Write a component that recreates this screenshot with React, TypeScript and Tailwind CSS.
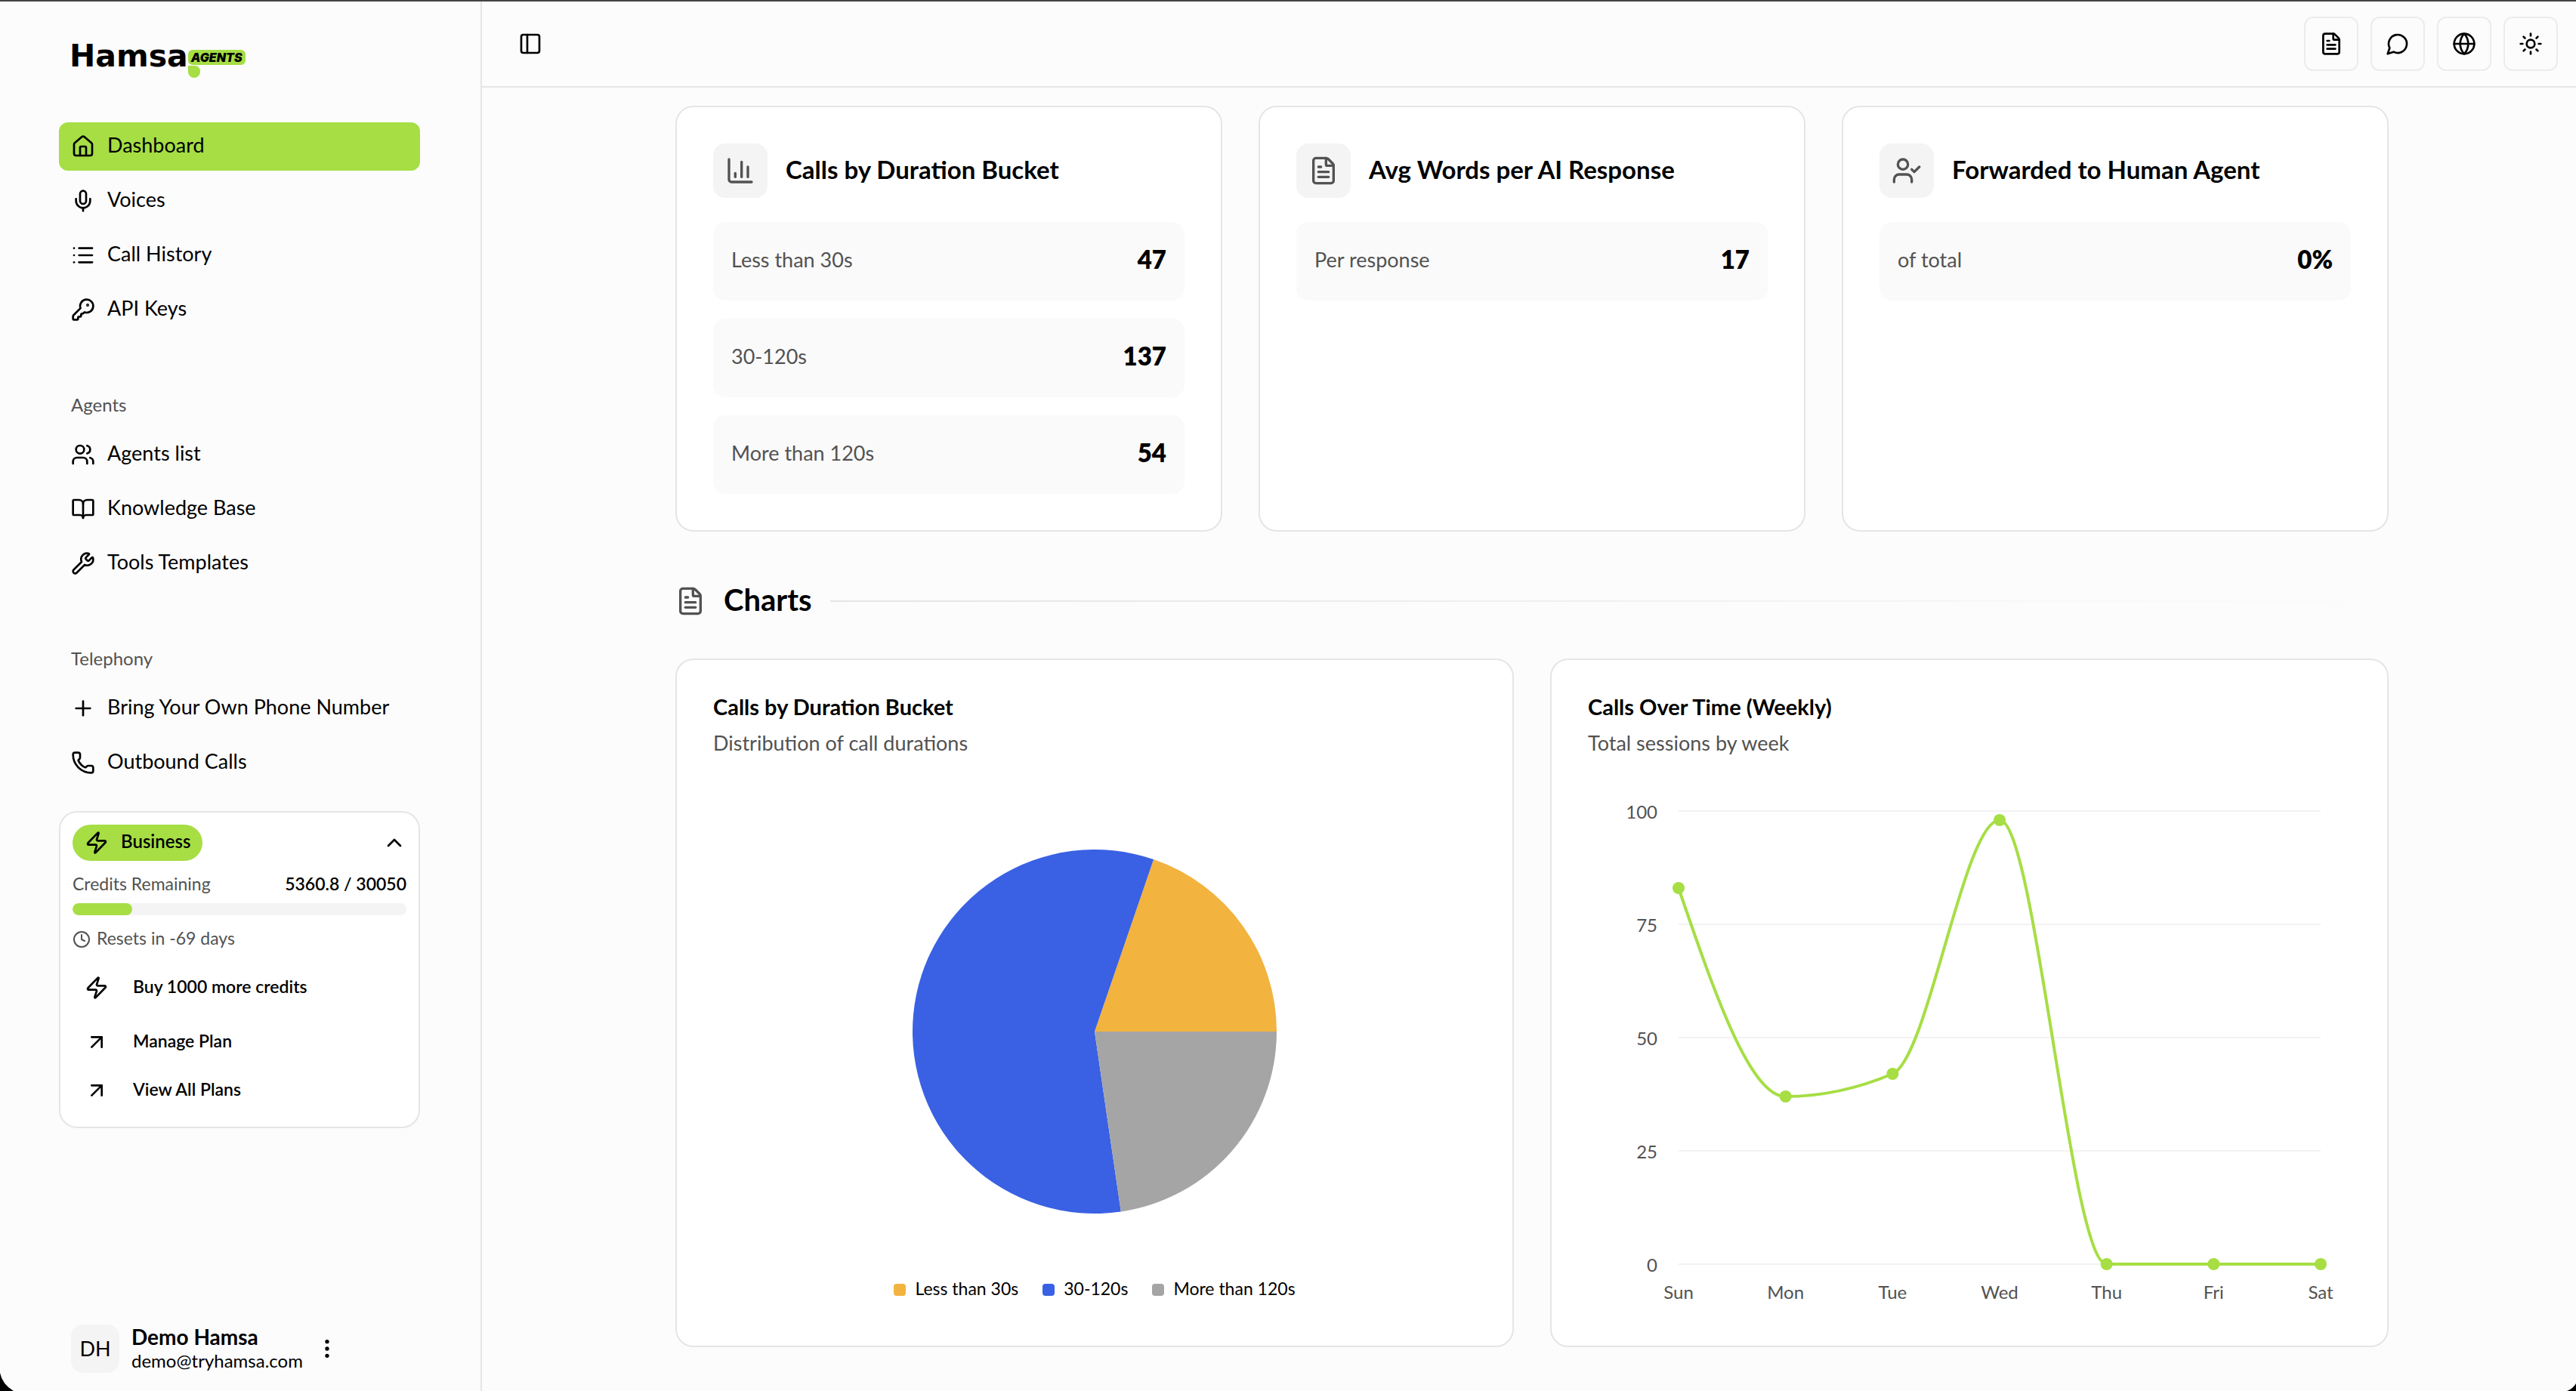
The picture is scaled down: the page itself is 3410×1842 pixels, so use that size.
import type { ReactNode } from 'react';
import {
  ArrowUpRight,
  BookOpen,
  ChevronUp,
  Clock,
  EllipsisVertical,
  FileText,
  Globe,
  House,
  List,
  Mic,
  PanelLeft,
  Phone,
  Plus,
  Sun,
  Users,
  Wrench,
  Zap,
} from 'lucide-react';

const buckets = [
  { label: 'Less than 30s', value: 47, fill: '#f2b33f', swatch: 'bg-[#f2b33f]' },
  { label: '30-120s', value: 137, fill: '#3a61e3', swatch: 'bg-[#3a61e3]' },
  { label: 'More than 120s', value: 54, fill: '#a5a5a5', swatch: 'bg-[#a5a5a5]' },
];

const weekly = [
  { day: 'Sun', calls: 83 },
  { day: 'Mon', calls: 37 },
  { day: 'Tue', calls: 42 },
  { day: 'Wed', calls: 98 },
  { day: 'Thu', calls: 0 },
  { day: 'Fri', calls: 0 },
  { day: 'Sat', calls: 0 },
];

function Icon({ children, className = 'size-8' }: { children: ReactNode; className?: string }) {
  return (
    <svg
      viewBox="0 0 24 24"
      fill="none"
      stroke="currentColor"
      strokeWidth="2"
      strokeLinecap="round"
      strokeLinejoin="round"
      className={className}
    >
      {children}
    </svg>
  );
}

function Logo() {
  return (
    <a href="#" className="flex items-start pl-3.5 text-black">
      <span className="font-['DejaVu_Sans'] text-[41px] leading-10 font-bold">Hamsa</span>
      <span className="relative mt-3 flex h-5 w-[76px] items-center justify-center rounded-md bg-[#a6de44] font-['Inter'] text-[16px] leading-5 font-black italic">
        AGENTS
        <svg viewBox="0 0 16 16" className="absolute top-[21px] left-0 size-4 fill-[#a6de44]">
          <path d="M0 0h9a7 7 0 0 1 7 7v1a8 8 0 0 1-16 0z" />
        </svg>
      </span>
    </a>
  );
}

function NavItem({ icon, label, active }: { icon: ReactNode; label: string; active?: boolean }) {
  return (
    <a
      href="#"
      className={
        active
          ? 'flex h-16 items-center gap-4 rounded-xl bg-[#a6de44] px-4 text-[27px] leading-10'
          : 'flex h-16 items-center gap-4 rounded-xl px-4 text-[27px] leading-10'
      }
    >
      {icon}
      <span className="pb-1">{label}</span>
    </a>
  );
}

function NavGroup({ title, children }: { title?: string; children: ReactNode }) {
  return (
    <div>
      {title && <h2 className="flex h-16 items-center px-4 pb-1 text-[24px] text-[#525252]">{title}</h2>}
      <nav className="flex flex-col gap-2">{children}</nav>
    </div>
  );
}

function PlanCard() {
  const used = 5360.8;
  const total = 30050;
  return (
    <section className="mt-8 rounded-3xl border-2 border-[#e5e5e5] bg-white p-4 text-[23px] leading-7">
      <div className="flex items-center justify-between">
        <span className="flex h-12 items-center gap-4 rounded-full bg-[#a6de44] px-4 text-[24px] font-semibold">
          <Zap className="size-8" />
          <span className="pb-1">Business</span>
        </span>
        <button type="button" aria-label="Collapse plan">
          <ChevronUp className="size-8" />
        </button>
      </div>
      <div className="mt-4 flex justify-between pb-1">
        <span className="text-[#525252]">Credits Remaining</span>
        <span className="font-semibold">
          {used} / {total}
        </span>
      </div>
      <div className="mt-2 h-4 overflow-hidden rounded-full bg-[#f4f4f4]">
        <div className="h-full rounded-full bg-[#a6de44]" style={{ width: `${(used / total) * 100}%` }} />
      </div>
      <div className="mt-4 flex items-center gap-2 text-[#525252]">
        <Clock className="size-6" />
        <span className="pb-1">Resets in -69 days</span>
      </div>
      <button type="button" className="mt-4 mb-2 flex h-16 w-full items-center gap-8 px-4 font-semibold">
        <Zap className="size-8" />
        <span className="pb-1">Buy 1000 more credits</span>
      </button>
      <a href="#" className="flex h-16 items-center gap-8 px-4 font-semibold">
        <ArrowUpRight className="size-8" />
        <span className="pb-1">Manage Plan</span>
      </a>
      <a href="#" className="flex h-16 items-center gap-8 px-4 font-semibold">
        <ArrowUpRight className="size-8" />
        <span className="pb-1">View All Plans</span>
      </a>
    </section>
  );
}

function Sidebar() {
  return (
    <aside className="flex w-[638px] shrink-0 flex-col border-r-2 border-[#e5e5e5] pt-13 pr-20 pb-6 pl-[78px]">
      <Logo />
      <div className="mt-[68px] flex flex-col gap-16">
        <NavGroup>
          <NavItem icon={<House className="size-8" />} label="Dashboard" active />
          <NavItem icon={<Mic className="size-8" />} label="Voices" />
          <NavItem icon={<List className="size-8" />} label="Call History" />
          <NavItem
            icon={
              <Icon>
                <path d="M2.586 17.414A2 2 0 0 0 2 18.828V21a1 1 0 0 0 1 1h3a1 1 0 0 0 1-1v-1a1 1 0 0 1 1-1h1a1 1 0 0 0 1-1v-1a1 1 0 0 1 1-1h.172a2 2 0 0 0 1.414-.586l.814-.814a6.5 6.5 0 1 0-4-4z" />
                <circle cx="16.5" cy="7.5" r=".5" fill="currentColor" />
              </Icon>
            }
            label="API Keys"
          />
        </NavGroup>
        <NavGroup title="Agents">
          <NavItem icon={<Users className="size-8" />} label="Agents list" />
          <NavItem icon={<BookOpen className="size-8" />} label="Knowledge Base" />
          <NavItem icon={<Wrench className="size-8" />} label="Tools Templates" />
        </NavGroup>
        <NavGroup title="Telephony">
          <NavItem icon={<Plus className="size-8" />} label="Bring Your Own Phone Number" />
          <NavItem icon={<Phone className="size-8" />} label="Outbound Calls" />
        </NavGroup>
      </div>
      <PlanCard />
      <div className="mt-auto flex items-center gap-4 px-4">
        <span className="flex size-16 items-center justify-center rounded-2xl bg-[#f4f4f4] text-[27px]">DH</span>
        <div className="leading-8">
          <p className="text-[28px] font-bold">Demo Hamsa</p>
          <p className="text-[24px]">demo@tryhamsa.com</p>
        </div>
        <button type="button" aria-label="Account menu">
          <EllipsisVertical className="size-8" />
        </button>
      </div>
    </aside>
  );
}

function HeaderButton({ label, children }: { label: string; children: ReactNode }) {
  return (
    <button
      type="button"
      aria-label={label}
      className="flex size-18 items-center justify-center rounded-xl border-2 border-[#ececec]"
    >
      {children}
    </button>
  );
}

function Header() {
  return (
    <header className="flex h-[114px] items-center justify-between border-b-2 border-[#e5e5e5] pr-6 pl-12">
      <button type="button" aria-label="Toggle sidebar">
        <PanelLeft className="size-8" />
      </button>
      <div className="flex gap-4">
        <HeaderButton label="Docs">
          <FileText className="size-8" />
        </HeaderButton>
        <HeaderButton label="Chat">
          <Icon>
            <path d="M7.9 20A9 9 0 1 0 4 16.1L2 22Z" />
          </Icon>
        </HeaderButton>
        <HeaderButton label="Language">
          <Globe className="size-8" />
        </HeaderButton>
        <HeaderButton label="Theme">
          <Sun className="size-8" />
        </HeaderButton>
      </div>
    </header>
  );
}

function StatCard({
  icon,
  title,
  rows,
}: {
  icon: ReactNode;
  title: string;
  rows: { label: string; value: string | number }[];
}) {
  return (
    <section className="rounded-3xl border-2 border-[#e5e5e5] bg-white p-12">
      <div className="flex items-center gap-6">
        <span className="flex size-18 items-center justify-center rounded-2xl bg-[#f4f4f4] text-[#525252]">{icon}</span>
        <h3 className="pb-1 text-[33px] leading-10 font-bold">{title}</h3>
      </div>
      <dl className="mt-8 flex flex-col gap-6">
        {rows.map((row) => (
          <div key={row.label} className="flex h-26 items-center justify-between rounded-2xl bg-[#fafafa] px-6 pb-1">
            <dt className="text-[27px] text-[#525252]">{row.label}</dt>
            <dd className="text-[33px] font-extrabold">{row.value}</dd>
          </div>
        ))}
      </dl>
    </section>
  );
}

function ChartCard({ title, subtitle, children }: { title: string; subtitle: string; children: ReactNode }) {
  return (
    <section className="rounded-3xl border-2 border-[#e5e5e5] bg-white p-12">
      <h3 className="text-[29px] leading-7 font-bold">{title}</h3>
      <p className="mt-3.5 mb-10.5 text-[27px] leading-10 text-[#525252]">{subtitle}</p>
      {children}
    </section>
  );
}

function slicePath(start: number, end: number, r: number) {
  // angles run counter-clockwise from three o'clock
  const x1 = r * Math.cos(start);
  const y1 = -r * Math.sin(start);
  const x2 = r * Math.cos(end);
  const y2 = -r * Math.sin(end);
  return `M0 0L${x1} ${y1}A${r} ${r} 0 ${end - start > Math.PI ? 1 : 0} 0 ${x2} ${y2}Z`;
}

function DurationPie() {
  const total = buckets.reduce((sum, b) => sum + b.value, 0);
  let angle = 0;
  return (
    <>
      <svg viewBox="-505 -320 1010 640" className="w-full">
        {buckets.map((b) => {
          const start = angle;
          angle += (b.value / total) * Math.PI * 2;
          return <path key={b.label} d={slicePath(start, angle, 241)} fill={b.fill} />;
        })}
      </svg>
      <ul className="flex h-12 items-center justify-center gap-8 pb-1 text-[23px]">
        {buckets.map((b) => (
          <li key={b.label} className="flex items-center gap-3">
            <span className={`size-4 rounded-sm ${b.swatch}`} />
            <span className="pb-1">{b.label}</span>
          </li>
        ))}
      </ul>
    </>
  );
}

type Point = { x: number; y: number };

// monotone cubic interpolation, as in d3's curveMonotoneX
function monotonePath(pts: Point[]) {
  const slopes = pts.slice(1).map((p, i) => (p.y - pts[i].y) / (p.x - pts[i].x));
  const tangents = pts.map((_, i) => {
    if (i === 0 || i === pts.length - 1) return 0;
    const a = slopes[i - 1];
    const b = slopes[i];
    return (Math.sign(a) + Math.sign(b)) * Math.min(Math.abs(a), Math.abs(b), 0.5 * Math.abs((a + b) / 2));
  });
  const last = pts.length - 1;
  tangents[0] = (3 * slopes[0] - tangents[1]) / 2;
  tangents[last] = (3 * slopes[last - 1] - tangents[last - 1]) / 2;

  let d = `M${pts[0].x} ${pts[0].y}`;
  for (let i = 1; i < pts.length; i++) {
    const p = pts[i - 1];
    const q = pts[i];
    const dx = (q.x - p.x) / 3;
    d += `C${p.x + dx} ${p.y + dx * tangents[i - 1]} ${q.x - dx} ${q.y - dx * tangents[i]} ${q.x} ${q.y}`;
  }
  return d;
}

function WeeklyLine() {
  const points = weekly.map((w, i) => ({ x: 120 + (850 / 6) * i, y: 628 - w.calls * 6 }));
  return (
    <svg viewBox="0 0 1010 688" className="w-full text-[24px]">
      {[100, 75, 50, 25, 0].map((tick) => (
        <g key={tick}>
          <line x1="120" x2="970" y1={628 - tick * 6} y2={628 - tick * 6} stroke="#f2f2f2" strokeWidth="2" />
          <text x="92" y={638 - tick * 6} textAnchor="end" fill="#525252">
            {tick}
          </text>
        </g>
      ))}
      <path d={monotonePath(points)} fill="none" stroke="#a6de44" strokeWidth="4" />
      {points.map((p, i) => (
        <g key={weekly[i].day}>
          <circle cx={p.x} cy={p.y} r="8" fill="#a6de44" />
          <text x={p.x} y="674" textAnchor="middle" fill="#525252">
            {weekly[i].day}
          </text>
        </g>
      ))}
    </svg>
  );
}

export default function App() {
  return (
    <div className="relative flex min-h-screen overflow-hidden border-t-2 border-[#444444] bg-[#fcfcfc] font-['Lato',sans-serif] text-black">
      <Sidebar />
      <div className="min-w-0 flex-1">
        <Header />
        <main className="pt-6 pr-[248px] pb-14 pl-[256px]">
          <div className="grid grid-cols-3 gap-12">
            <StatCard
              icon={
                <Icon className="size-10">
                  <path d="M3 3v16a2 2 0 0 0 2 2h16" />
                  <path d="M18 17V9" />
                  <path d="M13 17V5" />
                  <path d="M8 17v-3" />
                </Icon>
              }
              title="Calls by Duration Bucket"
              rows={buckets}
            />
            <StatCard
              icon={<FileText className="size-10" />}
              title="Avg Words per AI Response"
              rows={[{ label: 'Per response', value: 17 }]}
            />
            <StatCard
              icon={
                <Icon className="size-10">
                  <path d="M2 21v-2a4 4 0 0 1 4-4h6a4 4 0 0 1 4 4v2" />
                  <circle cx="9" cy="7" r="4" />
                  <path d="m16 11 2 2 4-4" />
                </Icon>
              }
              title="Forwarded to Human Agent"
              rows={[{ label: 'of total', value: '0%' }]}
            />
          </div>

          <div className="mt-16 mb-12 flex h-14 items-center gap-6">
            <FileText className="size-10 text-[#525252]" />
            <h2 className="pb-1 text-[40px] font-bold">Charts</h2>
            <div className="h-0.5 flex-1 bg-gradient-to-r from-[#e5e5e5] to-transparent" />
          </div>

          <div className="grid grid-cols-2 gap-12">
            <ChartCard title="Calls by Duration Bucket" subtitle="Distribution of call durations">
              <DurationPie />
            </ChartCard>
            <ChartCard title="Calls Over Time (Weekly)" subtitle="Total sessions by week">
              <WeeklyLine />
            </ChartCard>
          </div>
        </main>
      </div>

      {/* rounded window corners */}
      <svg viewBox="0 0 18 24" className="absolute bottom-0 left-0 h-6 w-[18px]">
        <path d="M0 0Q3 15 18 24H0Z" />
      </svg>
      <svg viewBox="0 0 12 10" className="absolute right-0 bottom-0 h-[10px] w-3">
        <path d="M12 0Q8 7 0 10H12Z" />
      </svg>
    </div>
  );
}
